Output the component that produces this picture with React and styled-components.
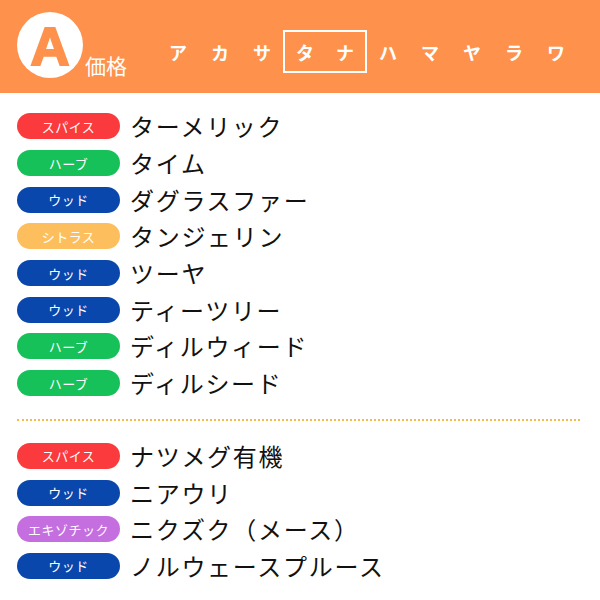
import React from "react";
import styled, { createGlobalStyle } from "styled-components";

const GlobalStyle = createGlobalStyle`
  body {
    margin: 0;
    background: #ffffff;
    font-family: "Noto Sans CJK JP", "Noto Sans", sans-serif;
  }
`;

const KANA = ["ア", "カ", "サ", "タ", "ナ", "ハ", "マ", "ヤ", "ラ", "ワ"];
const ACTIVE = ["タ", "ナ"];

const TAGS = {
  spice: { label: "スパイス", color: "#fa3a3c" },
  herb: { label: "ハーブ", color: "#17c159" },
  wood: { label: "ウッド", color: "#0a47ac" },
  citrus: { label: "シトラス", color: "#fdbf5e" },
  exotic: { label: "エキゾチック", color: "#c46ee0" },
};

const GROUPS = [
  [
    ["spice", "ターメリック"],
    ["herb", "タイム"],
    ["wood", "ダグラスファー"],
    ["citrus", "タンジェリン"],
    ["wood", "ツーヤ"],
    ["wood", "ティーツリー"],
    ["herb", "ディルウィード"],
    ["herb", "ディルシード"],
  ],
  [
    ["spice", "ナツメグ有機"],
    ["wood", "ニアウリ"],
    ["exotic", "ニクズク（メース）"],
    ["wood", "ノルウェースプルース"],
  ],
];

export default function App() {
  const before = KANA.slice(0, 3);
  const after = KANA.slice(5);
  return (
    <Page>
      <GlobalStyle />
      <Header>
        <Brand>
          <Logo>A</Logo>
          <BrandText>価格</BrandText>
        </Brand>
        <Nav>
          {before.map((k) => (
            <Kana key={k}>{k}</Kana>
          ))}
          <ActiveBox>
            {ACTIVE.map((k) => (
              <Kana key={k} $inner>
                {k}
              </Kana>
            ))}
          </ActiveBox>
          {after.map((k) => (
            <Kana key={k}>{k}</Kana>
          ))}
        </Nav>
      </Header>
      <Content>
        {GROUPS.map((group, gi) => (
          <React.Fragment key={gi}>
            {gi > 0 && <Divider />}
            <List>
              {group.map(([tag, name]) => (
                <Row key={name}>
                  <Pill $color={TAGS[tag].color}>{TAGS[tag].label}</Pill>
                  <Name>{name}</Name>
                </Row>
              ))}
            </List>
          </React.Fragment>
        ))}
      </Content>
    </Page>
  );
}

const Page = styled.div`
  width: 600px;
  height: 600px;
  overflow: hidden;
`;

const Header = styled.header`
  height: 93px;
  background: #fe914c;
  display: flex;
  align-items: flex-start;
  padding: 0 17px;
  box-sizing: border-box;
`;

const Brand = styled.div`
  display: flex;
  align-items: flex-end;
  width: 140px;
  margin-top: 12px;
`;

const Logo = styled.div`
  width: 66px;
  height: 66px;
  border-radius: 50%;
  background: #ffffff;
  color: #fe914c;
  display: flex;
  align-items: center;
  justify-content: center;
  font-family: "Liberation Sans", Arial, sans-serif;
  font-weight: 700;
  font-size: 54px;
  line-height: 1;
  padding-top: 1px;
  box-sizing: border-box;
  -webkit-text-stroke: 2px #fe914c;
  flex-shrink: 0;
`;

const BrandText = styled.span`
  color: #ffffff;
  font-size: 21px;
  line-height: 1;
  margin-left: 2px;
  margin-bottom: 2px;
`;

const Nav = styled.nav`
  display: flex;
  align-items: center;
  margin-top: 30px;
  height: 43px;
`;

const Kana = styled.span`
  width: ${(p) => (p.$inner ? "40px" : "42px")};
  text-align: center;
  color: #ffffff;
  font-size: 18px;
  font-weight: 700;
  line-height: 1;
`;

const ActiveBox = styled.div`
  display: flex;
  align-items: center;
  height: 43px;
  border: 2px solid #ffffff;
  box-sizing: border-box;
`;

const Content = styled.main`
  padding: 15px 17px 0;
`;

const List = styled.ul`
  list-style: none;
  margin: 0;
  padding: 0;
`;

const Row = styled.li`
  height: 36.7px;
  display: flex;
  align-items: center;
`;

const Pill = styled.span`
  width: 103px;
  height: 26px;
  border-radius: 13px;
  background: ${(p) => p.$color};
  color: #ffffff;
  font-size: 13px;
  display: flex;
  align-items: center;
  justify-content: center;
  flex-shrink: 0;
  letter-spacing: 0.5px;
`;

const Name = styled.span`
  margin-left: 10px;
  font-size: 24px;
  color: #111111;
  line-height: 1;
  letter-spacing: 1.7px;
`;

const Divider = styled.hr`
  border: 0;
  border-top: 2px dotted #f7b84e;
  margin: 17px 3px 17px 0;
`;
